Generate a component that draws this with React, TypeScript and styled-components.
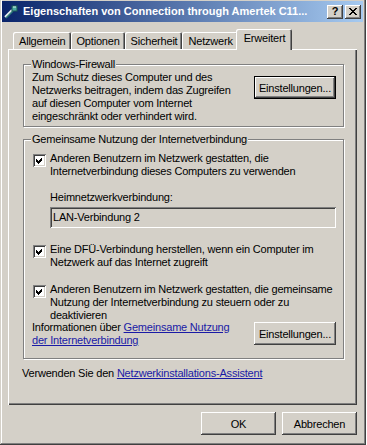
import React from "react";
import styled, { createGlobalStyle } from "styled-components";

const GlobalStyle = createGlobalStyle`
  html, body {
    margin: 0;
    padding: 0;
    background: #ffffff;
  }
  body {
    font-family: "Liberation Sans", Arial, sans-serif;
    font-size: 11px;
    line-height: 13px;
    letter-spacing: -0.2px;
    color: #000000;
  }
`;

const Window = styled.div`
  box-sizing: border-box;
  width: 366px;
  height: 445px;
  padding: 0 3px 4px 2px;
  background: #d4d0c8;
  box-shadow: inset -1px -1px #404040, inset 1px 0 #d4d0c8, inset -2px -2px #808080,
    inset 2px 0 #ffffff;
  display: flex;
  flex-direction: column;
`;

const TitleBar = styled.div`
  height: 21px;
  margin-top: 1px;
  display: flex;
  align-items: center;
  padding: 0 2px 0 1px;
  background: linear-gradient(to right, #0a246a, #a6caf0);
  color: #ffffff;
  font-weight: bold;
  font-size: 11px;
  letter-spacing: 0;
`;

const TitleText = styled.div`
  flex: 1;
  margin-left: 4px;
  white-space: nowrap;
  overflow: hidden;
`;

const CaptionButton = styled.div`
  box-sizing: border-box;
  width: 16px;
  height: 14px;
  margin-left: 2px;
  background: #d4d0c8;
  color: #000000;
  box-shadow: inset -1px -1px #404040, inset 1px 1px #ffffff, inset -2px -2px #808080;
  display: flex;
  align-items: center;
  justify-content: center;
  font-weight: bold;
  font-size: 11px;
  line-height: 11px;
`;

const Body = styled.div`
  flex: 1;
  display: flex;
  flex-direction: column;
  padding: 7px 6px 0 6px;
`;

const TabStrip = styled.div`
  height: 20px;
  display: flex;
  align-items: flex-end;
  padding-left: 5px;
  position: relative;
  z-index: 1;
`;

const Tab = styled.div<{ $active?: boolean }>`
  box-sizing: border-box;
  height: ${(p) => (p.$active ? "21px" : "17px")};
  margin: ${(p) => (p.$active ? "0 -2px -1px -2px" : "0")};
  padding: ${(p) => (p.$active ? "3px 7px 0 8px" : "3px 5px 0 6px")};
  background: #d4d0c8;
  white-space: nowrap;
  border-radius: 2px 2px 0 0;
  box-shadow: inset 1px 1px #ffffff, inset -1px 0 #404040, inset -2px 0 #808080;
  position: relative;
  z-index: ${(p) => (p.$active ? 2 : 1)};
`;

const Panel = styled.div`
  box-sizing: border-box;
  height: 356px;
  padding: 9px 13px 0 15px;
  box-shadow: inset 1px 1px #ffffff, inset -1px -1px #404040, inset -2px -2px #808080;
`;

const Group = styled.fieldset<{ $gap?: number }>`
  margin: ${(p) => p.$gap ?? 0}px 0 0 0;
  padding: 0 7px ${(p) => (p.$gap ? 11 : 3)}px 8px;
  border: 1px solid #808080;
  box-shadow: inset 1px 1px #ffffff, 1px 1px #ffffff;
  min-width: 0;
`;

const GroupTitle = styled.legend`
  padding: 0 1px;
  margin-left: -1px;
  line-height: 13px;
  background: #d4d0c8;
`;

const FirewallRow = styled.div`
  display: flex;
  justify-content: space-between;
  align-items: flex-start;
`;

const Para = styled.div`
  white-space: nowrap;
`;

const Button = styled.button<{ $default?: boolean; $width?: number }>`
  box-sizing: border-box;
  width: ${(p) => p.$width ?? 75}px;
  height: 23px;
  padding: 0;
  margin: 0;
  font-family: inherit;
  font-size: 11px;
  letter-spacing: inherit;
  color: #000000;
  background: #d4d0c8;
  border: ${(p) => (p.$default ? "1px solid #000000" : "none")};
  box-shadow: inset -1px -1px #404040, inset 1px 1px #ffffff, inset -2px -2px #808080,
    inset 2px 2px #d4d0c8;
  flex-shrink: 0;
`;

const CheckRow = styled.div<{ $top: number }>`
  display: flex;
  align-items: flex-start;
  gap: 4px;
  margin-top: ${(p) => p.$top}px;
  padding-left: 1px;
`;

const Box = styled.div`
  box-sizing: border-box;
  width: 13px;
  height: 13px;
  margin-top: 2px;
  flex-shrink: 0;
  background: #ffffff;
  box-shadow: inset 1px 1px #808080, inset -1px -1px #ffffff, inset 2px 2px #404040,
    inset -2px -2px #d4d0c8;
  display: flex;
`;

const Indented = styled.div<{ $top: number }>`
  margin-top: ${(p) => p.$top}px;
  padding-left: 18px;
`;

const Field = styled.div`
  box-sizing: border-box;
  height: 21px;
  margin-top: 3px;
  padding: 0 3px;
  display: flex;
  align-items: center;
  background: #d4d0c8;
  box-shadow: inset 1px 1px #808080, inset -1px -1px #ffffff, inset 2px 2px #404040,
    inset -2px -2px #d4d0c8;
`;

const InfoRow = styled.div`
  display: flex;
  justify-content: space-between;
  align-items: flex-start;
  margin-top: -1px;
`;

const Link = styled.a`
  color: #1a1aa6;
  text-decoration: underline;
  cursor: pointer;
`;

const Footnote = styled.div`
  margin-top: 8px;
  margin-left: -1px;
`;

const Footer = styled.div`
  display: flex;
  justify-content: flex-end;
  gap: 6px;
  margin-top: 7px;
`;

const Check = () => (
  <svg width="13" height="13" viewBox="0 0 13 13" shapeRendering="crispEdges">
    <polygon points="3,5 5,7 9,3 9,6 5,10 3,8" fill="#000000" />
  </svg>
);

const ConnIcon = () => (
  <svg width="16" height="16" viewBox="0 0 16 16">
    <path d="M2 13 L9 6" stroke="#e8f0f0" strokeWidth="2" />
    <path d="M3 14 L10 7" stroke="#2f7f7a" strokeWidth="1.5" />
    <rect x="9" y="2" width="5" height="5" fill="#4ca9a0" stroke="#1f5a56" strokeWidth="1" />
    <path d="M10 3 L13 3" stroke="#d8f0ea" strokeWidth="1" />
  </svg>
);

const CloseGlyph = () => (
  <svg width="8" height="7" viewBox="0 0 8 7" shapeRendering="crispEdges">
    <path d="M0 0 L7 7 M1 0 L8 7 M7 0 L0 7 M8 0 L1 7" stroke="#000000" strokeWidth="1" />
  </svg>
);

const tabs = ["Allgemein", "Optionen", "Sicherheit", "Netzwerk", "Erweitert"];

export default function App() {
  return (
    <>
      <GlobalStyle />
      <Window>
        <TitleBar>
          <ConnIcon />
          <TitleText>Eigenschaften von Connection through Amertek C11...</TitleText>
          <CaptionButton>?</CaptionButton>
          <CaptionButton>
            <CloseGlyph />
          </CaptionButton>
        </TitleBar>
        <Body>
          <TabStrip>
            {tabs.map((t) => (
              <Tab key={t} $active={t === "Erweitert"}>
                {t}
              </Tab>
            ))}
          </TabStrip>
          <Panel>
            <Group>
              <GroupTitle>Windows-Firewall</GroupTitle>
              <FirewallRow>
                <Para>
                  Zum Schutz dieses Computer und des
                  <br />
                  Netzwerks beitragen, indem das Zugreifen
                  <br />
                  auf diesen Computer vom Internet
                  <br />
                  eingeschränkt oder verhindert wird.
                </Para>
                <Button $default $width={82} style={{ marginTop: 5 }}>
                  Einstellungen...
                </Button>
              </FirewallRow>
            </Group>

            <Group $gap={6}>
              <GroupTitle>Gemeinsame Nutzung der Internetverbindung</GroupTitle>
              <CheckRow $top={6}>
                <Box>
                  <Check />
                </Box>
                <Para>
                  Anderen Benutzern im Netzwerk gestatten, die
                  <br />
                  Internetverbindung dieses Computers zu verwenden
                </Para>
              </CheckRow>
              <Indented $top={13}>
                <div>Heimnetzwerkverbindung:</div>
                <Field>LAN-Verbindung 2</Field>
              </Indented>
              <CheckRow $top={15}>
                <Box>
                  <Check />
                </Box>
                <Para>
                  Eine DFÜ-Verbindung herstellen, wenn ein Computer im
                  <br />
                  Netzwerk auf das Internet zugreift
                </Para>
              </CheckRow>
              <CheckRow $top={14}>
                <Box>
                  <Check />
                </Box>
                <Para>
                  Anderen Benutzern im Netzwerk gestatten, die gemeinsame
                  <br />
                  Nutzung der Internetverbindung zu steuern oder zu
                  <br />
                  deaktivieren
                </Para>
              </CheckRow>
              <InfoRow>
                <Para>
                  Informationen über <Link>Gemeinsame Nutzung</Link>
                  <br />
                  <Link>der Internetverbindung</Link>
                </Para>
                <Button $width={82} style={{ marginTop: 1 }}>
                  Einstellungen...
                </Button>
              </InfoRow>
            </Group>

            <Footnote>
              Verwenden Sie den <Link>Netzwerkinstallations-Assistent</Link>
            </Footnote>
          </Panel>
          <Footer>
            <Button>OK</Button>
            <Button>Abbrechen</Button>
          </Footer>
        </Body>
      </Window>
    </>
  );
}
